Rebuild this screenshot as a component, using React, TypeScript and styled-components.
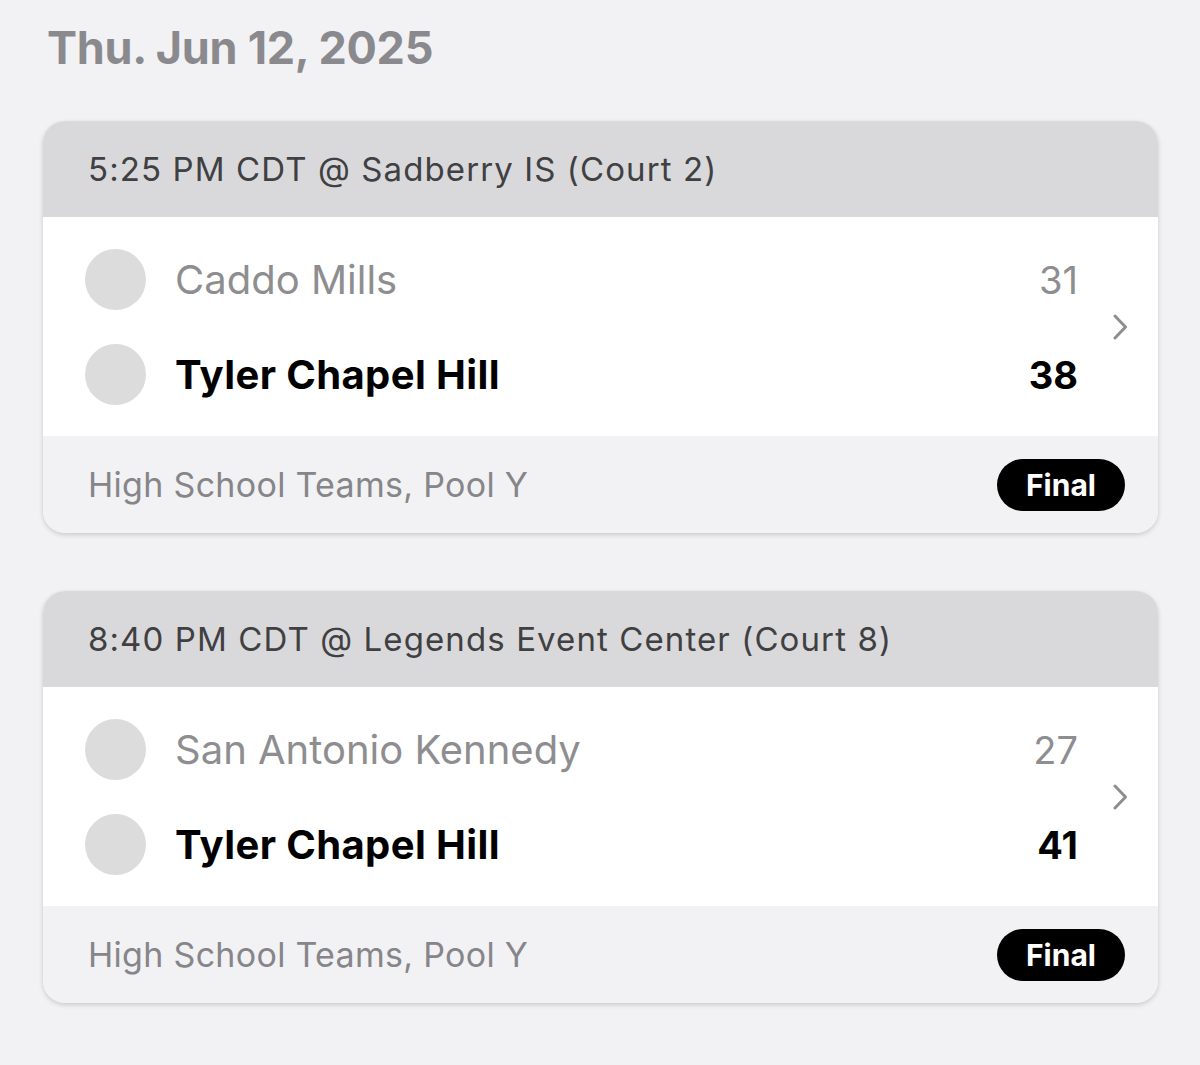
import React from "react";
import styled, { createGlobalStyle } from "styled-components";

const GlobalStyle = createGlobalStyle`
  html, body {
    margin: 0;
    padding: 0;
    background: #f2f2f4;
  }
  body {
    font-family: Inter, "Noto Sans", sans-serif;
    -webkit-font-smoothing: antialiased;
  }
`;

const Page = styled.div`
  padding: 18px 42px 40px 43px;
  display: flex;
  flex-direction: column;
`;

const DateTitle = styled.h1`
  margin: 0 0 43px 4px;
  font-size: 45px;
  line-height: 60px;
  font-weight: 700;
  color: #8a8a8e;
  letter-spacing: -0.3px;
`;

const CardList = styled.div`
  display: flex;
  flex-direction: column;
  gap: 58px;
`;

const Card = styled.div`
  border-radius: 22px;
  overflow: hidden;
  background: #ffffff;
  box-shadow: 0 2px 5px rgba(0, 0, 0, 0.16), 0 0 1px rgba(0, 0, 0, 0.08);
`;

const CardHeader = styled.div`
  height: 96px;
  display: flex;
  align-items: center;
  padding-left: 45px;
  background: #d9d9db;
  font-size: 33px;
  letter-spacing: 1.1px;
  color: #404042;
`;

const CardBody = styled.div`
  display: flex;
  align-items: center;
  padding: 15px 0 14px;
`;

const Teams = styled.div`
  flex: 1;
  display: flex;
  flex-direction: column;
`;

const TeamRow = styled.div`
  height: 95px;
  display: flex;
  align-items: center;
  padding-left: 42px;
`;

const Logo = styled.div`
  width: 61px;
  height: 61px;
  border-radius: 50%;
  background: #dcdcdd;
  flex-shrink: 0;
`;

const TeamName = styled.div<{ $winner?: boolean }>`
  flex: 1;
  margin-left: 29px;
  font-size: 40px;
  font-weight: ${(p) => (p.$winner ? 700 : 400)};
  color: ${(p) => (p.$winner ? "#000000" : "#8e8e90")};
  letter-spacing: ${(p) => (p.$winner ? "0.4px" : "0")};
`;

const Score = styled.div<{ $winner?: boolean }>`
  font-size: 38px;
  font-weight: ${(p) => (p.$winner ? 700 : 400)};
  color: ${(p) => (p.$winner ? "#000000" : "#8e8e90")};
  text-align: right;
`;

const ChevronCell = styled.div`
  width: 80px;
  padding-left: 35px;
  box-sizing: border-box;
  display: flex;
  align-items: center;
`;

const CardFooter = styled.div`
  height: 97px;
  display: flex;
  align-items: center;
  justify-content: space-between;
  padding: 0 33px 0 45px;
  background: #f2f2f4;
`;

const FooterText = styled.div`
  font-size: 34px;
  letter-spacing: 0.3px;
  color: #86868a;
`;

const Badge = styled.div`
  height: 52px;
  width: 128px;
  border-radius: 26px;
  background: #000000;
  color: #ffffff;
  font-size: 30px;
  font-weight: 700;
  display: flex;
  align-items: center;
  justify-content: center;
`;

const Chevron = () => (
  <svg width="15" height="26" viewBox="0 0 15 26" fill="none">
    <polyline
      points="2,2 12.5,13 2,24"
      stroke="#8e8e90"
      strokeWidth="3"
      strokeLinecap="round"
      strokeLinejoin="round"
    />
  </svg>
);

type Game = {
  header: string;
  away: { name: string; score: number; winner?: boolean };
  home: { name: string; score: number; winner?: boolean };
  pool: string;
  status: string;
};

const games: Game[] = [
  {
    header: "5:25 PM CDT @ Sadberry IS (Court 2)",
    away: { name: "Caddo Mills", score: 31 },
    home: { name: "Tyler Chapel Hill", score: 38, winner: true },
    pool: "High School Teams, Pool Y",
    status: "Final",
  },
  {
    header: "8:40 PM CDT @ Legends Event Center (Court 8)",
    away: { name: "San Antonio Kennedy", score: 27 },
    home: { name: "Tyler Chapel Hill", score: 41, winner: true },
    pool: "High School Teams, Pool Y",
    status: "Final",
  },
];

export default function App() {
  return (
    <>
      <GlobalStyle />
      <Page>
        <DateTitle>Thu. Jun 12, 2025</DateTitle>
        <CardList>
          {games.map((g, i) => (
            <Card key={i}>
              <CardHeader>{g.header}</CardHeader>
              <CardBody>
                <Teams>
                  {[g.away, g.home].map((t, j) => (
                    <TeamRow key={j}>
                      <Logo />
                      <TeamName $winner={t.winner}>{t.name}</TeamName>
                      <Score $winner={t.winner}>{t.score}</Score>
                    </TeamRow>
                  ))}
                </Teams>
                <ChevronCell>
                  <Chevron />
                </ChevronCell>
              </CardBody>
              <CardFooter>
                <FooterText>{g.pool}</FooterText>
                <Badge>{g.status}</Badge>
              </CardFooter>
            </Card>
          ))}
        </CardList>
      </Page>
    </>
  );
}
